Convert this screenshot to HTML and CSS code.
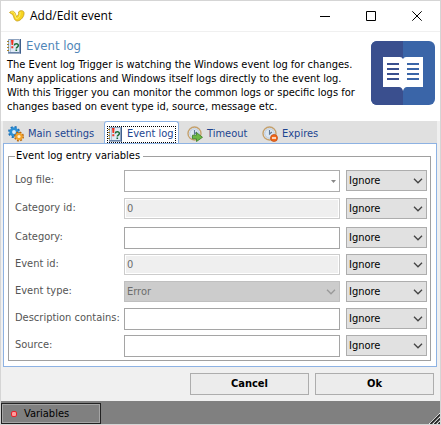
FILE: index.html
```html
<!DOCTYPE html>
<html lang="en">
<head>
<meta charset="utf-8">
<title>Add/Edit event</title>
<link rel="stylesheet" href="styles.css">
</head>
<body>
<svg class="defs" aria-hidden="true">
  <symbol id="log" viewBox="0 0 16 16">
    <path d="M2.500 1.500h11v13h-11z" fill="#dfeaf6" stroke="#8ea3bf"/>
    <path d="M14.500 1v14.500M2 15h13" stroke="#3f5f8c"/>
    <path d="M4.500 2v12" stroke="#b4c4d8"/>
    <path d="M1 3.500h2M1 6.500h2M1 9.500h2M1 12.500h2" stroke="#a8842c"/>
    <path d="M5 2h2.600l-.5 5H5.500zM5.300 8.300h2v2h-2z" fill="#ee3322"/>
    <path d="M8.300 7.500C8.500 5.200 12.500 5.300 12.300 7.600c-.1 1.500-2 1.500-2 3" fill="none" stroke="#1a6b35" stroke-width="1.500"/>
    <path d="M9.500 11.500h1.600v1.500H9.500z" fill="#1a6b35"/>
  </symbol>
  <symbol id="clock" viewBox="0 0 16 16">
    <circle cx="7.500" cy="7.500" r="6.500" fill="#f0f4f8" stroke="#c4a06c" stroke-width="1.400"/>
    <circle cx="7.500" cy="7.500" r="4.800" fill="#dce7f2" stroke="#a8b9cf" stroke-width=".8"/>
    <path d="M7.500 4v4l2.500-2" fill="none" stroke="#5f7897" stroke-width="1.100"/>
  </symbol>
  <symbol id="chevron" viewBox="0 0 10 6">
    <path d="M1 .8l4 4 4-4" fill="none" stroke="currentColor" stroke-width="1.300"/>
  </symbol>
</svg>
<main class="window">
  <header class="titlebar">
    <svg class="app-icon" viewBox="0 0 16 12" aria-hidden="true"><path d="M.5 2.500C2 .8 5 .5 6 3l1.500 3.500C9 6 10 4 9.500 2c1.500-2 5-1.800 5.500.5.500 4-3 8-6.500 8.500C5 11 5 6.500 3.500 4.500 2.500 3.500 1.500 3.500.5 2.500z" fill="#f7d420" stroke="#c39a19" stroke-width=".8"/><path d="M2 2.200c2-.8 3 0 3.600 1.500L7.200 8.500C9.500 8.800 11.500 6 11 2" fill="none" stroke="#fff06a"/></svg>
    <h1>Add/Edit event</h1>
    <div class="controls">
      <button aria-label="Minimize"><svg viewBox="0 0 10 10"><path d="M0 5.500h10"/></svg></button>
      <button aria-label="Maximize"><svg viewBox="0 0 10 10"><path d="M.5.5h9v9h-9z"/></svg></button>
      <button aria-label="Close"><svg viewBox="0 0 10 10"><path d="M.3.3l9.400 9.400M9.700.3L.3 9.700"/></svg></button>
    </div>
  </header>
  <section class="intro">
    <div class="intro-text">
      <h2><svg class="icon" aria-hidden="true"><use href="#log"/></svg>Event log</h2>
      <p>The Event log Trigger is watching the Windows event log for changes.<br>Many applications and Windows itself logs directly to the event log.<br>With this Trigger you can monitor the common logs or specific logs for<br>changes based on event type id, source, message etc.</p>
    </div>
    <svg class="book" viewBox="0 0 64 64" aria-hidden="true">
      <rect width="64" height="64" rx="6" fill="#3a65a8"/>
      <path d="M6 0h26v64H6a6 6 0 0 1-6-6V6a6 6 0 0 1 6-6z" fill="#3a4f8e"/>
      <path d="M12 16h17q2 0 3 2 1-2 3-2h17v30H36q-3 0-4 4-1-4-4-4H12z" fill="#fff"/>
      <path d="M16 23h12M16 28h12M16 33h12M16 38h12" stroke="#3a4f8e" stroke-width="2"/>
      <path d="M36 23h12M36 28h12M36 33h12M36 38h12" stroke="#3a65a8" stroke-width="2"/>
    </svg>
  </section>
  <div class="body">
    <nav class="tabs" role="tablist">
      <button class="tab tab-main" role="tab"><svg class="icon" viewBox="0 0 16 16" aria-hidden="true"><circle cx="6" cy="6" r="4.800" fill="none" stroke="#1c70b8" stroke-width="2.400" stroke-dasharray="2 1.770"/><circle cx="6" cy="6" r="3.300" fill="#dcecf8" stroke="#2d8fd4" stroke-width="2.800"/><circle cx="11" cy="10.500" r="4" fill="none" stroke="#b8660c" stroke-width="2" stroke-dasharray="1.800 1.340"/><circle cx="11" cy="10.500" r="2.700" fill="#fff1cf" stroke="#f2a22b" stroke-width="2.200"/></svg>Main settings</button>
      <button class="tab tab-active" role="tab" aria-selected="true"><span class="focus"><svg class="icon" aria-hidden="true"><use href="#log"/></svg>Event log</span></button>
      <button class="tab tab-timeout" role="tab"><svg class="icon" viewBox="0 0 16 16" aria-hidden="true"><use href="#clock"/><path d="M5.500 9.200h4V6.500l6 4.800-6 4.200v-2.700h-4z" fill="#6cb845" stroke="#397c27" stroke-width=".8"/></svg>Timeout</button>
      <button class="tab tab-expires" role="tab"><svg class="icon" viewBox="0 0 16 16" aria-hidden="true"><use href="#clock"/><circle cx="12" cy="12" r="3.500" fill="#f26a1b" stroke="#bd4510" stroke-width=".7"/><path d="M10 12h4" stroke="#fff" stroke-width="1.400"/></svg>Expires</button>
    </nav>
    <div class="panel">
      <fieldset>
        <legend>Event log entry variables</legend>
        <div class="fields">
          <label for="file">Log file:</label>
          <div class="pick combo"><select id="file"><option></option></select><svg viewBox="0 0 5 3"><path d="M0 0h5L2.500 3z" fill="#888"/></svg></div>
          <div class="pick"><select aria-label="Log file filter"><option>Ignore</option></select><svg><use href="#chevron"/></svg></div>
          <label for="catid">Category id:</label>
          <input id="catid" value="0" disabled>
          <div class="pick"><select aria-label="Category id filter"><option>Ignore</option></select><svg><use href="#chevron"/></svg></div>
          <label for="cat">Category:</label>
          <input id="cat">
          <div class="pick"><select aria-label="Category filter"><option>Ignore</option></select><svg><use href="#chevron"/></svg></div>
          <label for="evid">Event id:</label>
          <input id="evid" value="0" disabled>
          <div class="pick"><select aria-label="Event id filter"><option>Ignore</option></select><svg><use href="#chevron"/></svg></div>
          <label for="type">Event type:</label>
          <div class="pick off"><select id="type" disabled><option>Error</option></select><svg><use href="#chevron"/></svg></div>
          <div class="pick"><select aria-label="Event type filter"><option>Ignore</option></select><svg><use href="#chevron"/></svg></div>
          <label for="desc">Description contains:</label>
          <input id="desc">
          <div class="pick"><select aria-label="Description filter"><option>Ignore</option></select><svg><use href="#chevron"/></svg></div>
          <label for="source">Source:</label>
          <input id="source">
          <div class="pick"><select aria-label="Source filter"><option>Ignore</option></select><svg><use href="#chevron"/></svg></div>
        </div>
      </fieldset>
    </div>
    <div class="actions"><button>Cancel</button><button>Ok</button></div>
  </div>
  <footer class="status">
    <button><svg viewBox="0 0 6 6" aria-hidden="true"><rect x=".5" y=".5" width="5" height="5" rx="1.500" fill="#ff9c9c" stroke="#e5232b"/></svg>Variables</button>
    <svg class="grip" viewBox="0 0 11 11" aria-hidden="true"><path d="M0 11L11 0M4 11l7-7M8 11l3-3" stroke="#e8e8e8"/><path d="M1.500 11L11 1.500M5.500 11L11 5.500M9.500 11L11 9.500" stroke="#222" stroke-width="1.500"/></svg>
  </footer>
</main>
</body>
</html>
```
FILE: styles.css
```css
* { box-sizing: border-box; }
body { margin: 0; font: 11px/14px "DejaVu Sans Condensed", "Noto Sans", sans-serif; color: #000; }
button, input, select { font: inherit; color: inherit; margin: 0; border-radius: 0; }
h1, h2, p { margin: 0; font-weight: normal; }
.defs { position: absolute; width: 0; height: 0; }
.window { min-height: 100vh; display: flex; flex-direction: column; border: 1px solid #d5d5d5; background: #fff; }

.titlebar { display: flex; align-items: center; height: 31px; border-bottom: 1px solid #f0f0f0; padding-left: 8px; }
.app-icon { width: 16px; height: 12px; margin-right: 5px; }
.titlebar h1 { flex: 1; font-family: "Open Sans", sans-serif; font-size: 12px; line-height: 16px; }
.controls { display: flex; }
.controls button { width: 46px; height: 28px; padding: 0; border: 0; background: none; display: grid; place-items: center; }
.controls svg { width: 10px; height: 10px; fill: none; stroke: #000; }

.intro { display: flex; justify-content: space-between; height: 89px; padding: 5px 5px 0 6px; }
.intro h2 { display: flex; align-items: center; gap: 4px; font-size: 13px; line-height: 17px; color: #4f86b8; margin-bottom: 4px; margin-left: -1px; }
.intro p { line-height: 14px; white-space: nowrap; }
.icon { width: 16px; height: 16px; flex: none; }
.book { width: 64px; height: 64px; flex: none; margin-top: 4px; }

.body { flex: 1; background: #f0f0f0; padding: 0 3px 0 2px; }
.tabs { display: flex; height: 22px; background: #e0e0e0; }
.tab { display: flex; align-items: center; border: 0; background: none; padding: 3px 0 0; color: #1d4590; gap: 4px; white-space: nowrap; }
.tab-main { width: 101px; padding-left: 5px; }
.tab-active { width: 75px; padding: 3px 2px 0; background: #fff; border: 1px solid #8db2e3; border-bottom: 0; border-radius: 3px 3px 0 0; }
.focus { display: flex; align-items: center; gap: 4px; width: 100%; height: 17px; outline: 1px dotted #000; outline-offset: -1px; }
.tab-timeout { width: 75px; padding-left: 8px; }
.tab-expires { padding-left: 8px; }

.panel { background: #fff; border: 1px solid #8db2e3; padding: 5px 5px 5px 4px; }
fieldset { margin: 0; padding: 0 3px 3px 6px; border: 1px solid #a0a0a0; min-width: 0; }
legend { padding: 0 3px 0 1px; line-height: 14px; }
.fields { display: grid; grid-template-columns: 109px 1fr 81px; grid-template-rows: 28px 29px repeat(4, 27px) 22px; align-items: start; padding-top: 7px; }
.fields label { line-height: 20px; white-space: nowrap; color: #555; }
.fields input { width: 100%; height: 22px; border: 1px solid #a5a5a5; background: #fff; padding: 0 2px; }
.fields > :nth-child(3n + 2) { width: calc(100% - 6px); }
.fields input:disabled { height: 21px; border-color: #ccc; background: #efefef; box-shadow: inset 0 0 0 1px #fff; color: #6d6d6d; }
.pick { position: relative; }
.pick select { display: block; appearance: none; width: 100%; height: 21px; border: 1px solid #adadad; background: #e1e1e1; color: #000; padding: 0 2px; opacity: 1; }
.pick svg { position: absolute; right: 4px; top: 8px; width: 10px; height: 6px; color: #444; pointer-events: none; }
.pick.combo select { height: 22px; background: #fff; }
.pick.combo svg { width: 5px; height: 3px; top: 10px; }
.pick.off select { background: #ccc; border-color: #bfbfbf; color: #6d6d6d; }
.pick.off svg { color: #999; }

.actions { display: flex; justify-content: flex-end; gap: 6px; padding: 6px 3px 6px 0; }
.actions button { width: 119px; height: 22px; padding: 0; border: 1px solid #adadad; background: #ececec; font-weight: bold; }

.status { display: flex; justify-content: space-between; align-items: flex-end; height: 23px; background: #808080; }
.status button { display: flex; align-items: center; gap: 7px; width: 100px; height: 21px; padding: 0 0 0 9px; border: 1px solid #222; box-shadow: inset 0 0 0 1px #a5a5a5; background: #808080; }
.status button svg { width: 6px; height: 6px; }
.grip { width: 11px; height: 11px; }
```
